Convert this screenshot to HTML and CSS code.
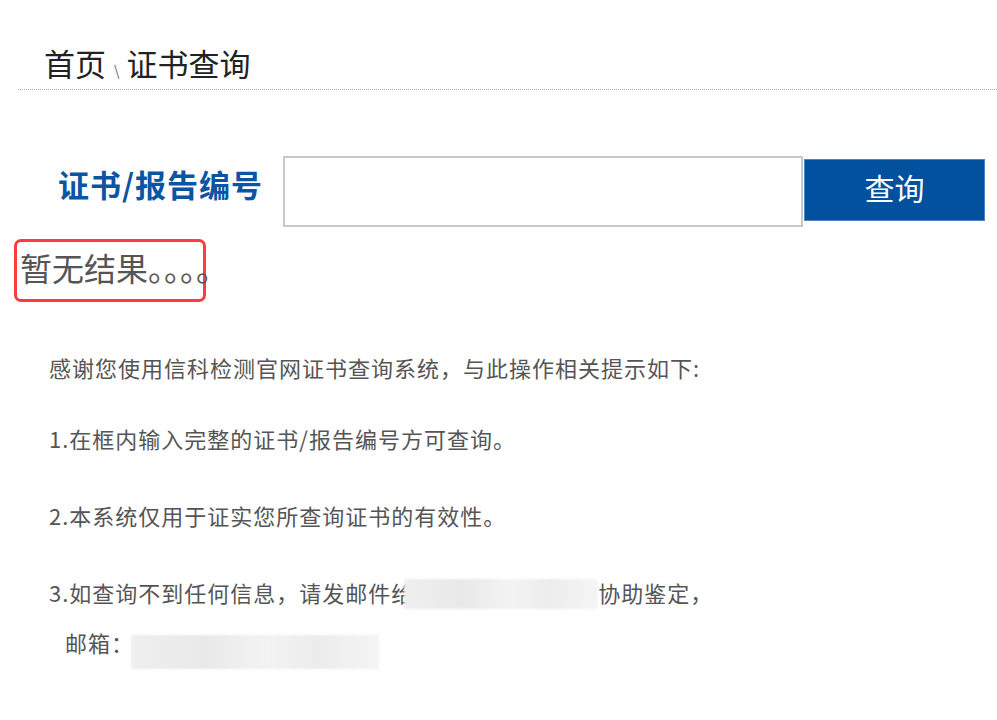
FILE: index.html
```html
<!DOCTYPE html>
<html lang="zh-CN">
<head>
<meta charset="UTF-8">
<meta name="viewport" content="width=device-width, initial-scale=1.0">
<title>证书查询</title>
<link rel="stylesheet" href="styles.css">
</head>
<body>
<div class="page">
<div class="crumb">
<span>首页</span><span class="sep">\</span><span>证书查询</span>
</div>
<div class="search">
<div class="label">证书/报告编号</div>
<input type="text" class="code-input">
<button class="btn">查询</button>
</div>
<div class="empty">暂无结果<span class="dots">。。。。</span></div>
<div class="notes">
<p class="intro">感谢您使用信科检测官网证书查询系统，与此操作相关提示如下:</p>
<p>1.在框内输入完整的证书/报告编号方可查询。</p>
<p>2.本系统仅用于证实您所查询证书的有效性。</p>
<p>3.如查询不到任何信息，请发邮件给<span class="blur blur-a"></span>协助鉴定，</p>
<p class="mail">邮箱：<span class="blur blur-b"></span></p>
</div>
</div>
</body>
</html>
```

FILE: styles.css
```css
body {
margin: 0;
background-color: #fff;
font-family: "Noto Sans CJK SC", "Noto Sans", sans-serif;
color: #333;
}

.page {
width: 997px;
}

.crumb {
margin-left: 18px;
padding: 40px 0 3px 26px;
border-bottom: 1px dotted #aaa;
font-size: 31px;
line-height: 46px;
height: 46px;
color: #222;
}

.crumb .sep {
font-size: 14px;
line-height: 0;
color: #666;
margin: 0 7px 0 8px;
}

.search {
display: flex;
align-items: center;
margin-top: 66px;
height: 71px;
}

.label {
margin-left: 58px;
width: 225px;
margin-bottom: 16px;
font-size: 31px;
font-weight: bold;
letter-spacing: 1px;
color: #0b55a3;
white-space: nowrap;
}

.code-input {
box-sizing: border-box;
width: 520px;
height: 71px;
border: 2px solid #c8c8c8;
margin: 0;
}

.btn {
box-sizing: border-box;
width: 181px;
height: 62px;
margin-left: 1px;
margin-bottom: 3px;
border: 1px solid #4a86c6;
background-color: #02519f;
color: #fff;
font-family: inherit;
font-size: 30px;
line-height: 1;
padding-bottom: 8px;
}

.empty {
box-sizing: border-box;
width: 192px;
height: 63px;
margin: 12px 0 0 14px;
border: 3px solid #ff3b3f;
border-radius: 7px;
padding-left: 3px;
font-size: 32px;
line-height: 50px;
color: #555;
white-space: nowrap;
}

.empty .dots {
letter-spacing: 0;
}

.notes {
margin-top: 49px;
padding-left: 49px;
font-size: 22px;
letter-spacing: 1px;
color: #555;
}

.notes p {
margin: 0 0 45px;
line-height: 32px;
}

.notes .intro {
margin-bottom: 39px;
}

.notes .mail {
padding-left: 16px;
margin-top: -28px;
}

.blur {
display: inline-block;
height: 30px;
background: linear-gradient(90deg, #efefef, #e9e9e9 30%, #f3f3f3 55%, #ececec 75%, #f5f5f5);
filter: blur(1px);
}

.blur-a {
width: 194px;
margin-left: -10px;
vertical-align: -7px;
}

.blur-b {
width: 248px;
height: 34px;
margin-left: -3px;
vertical-align: -17px;
}
```
